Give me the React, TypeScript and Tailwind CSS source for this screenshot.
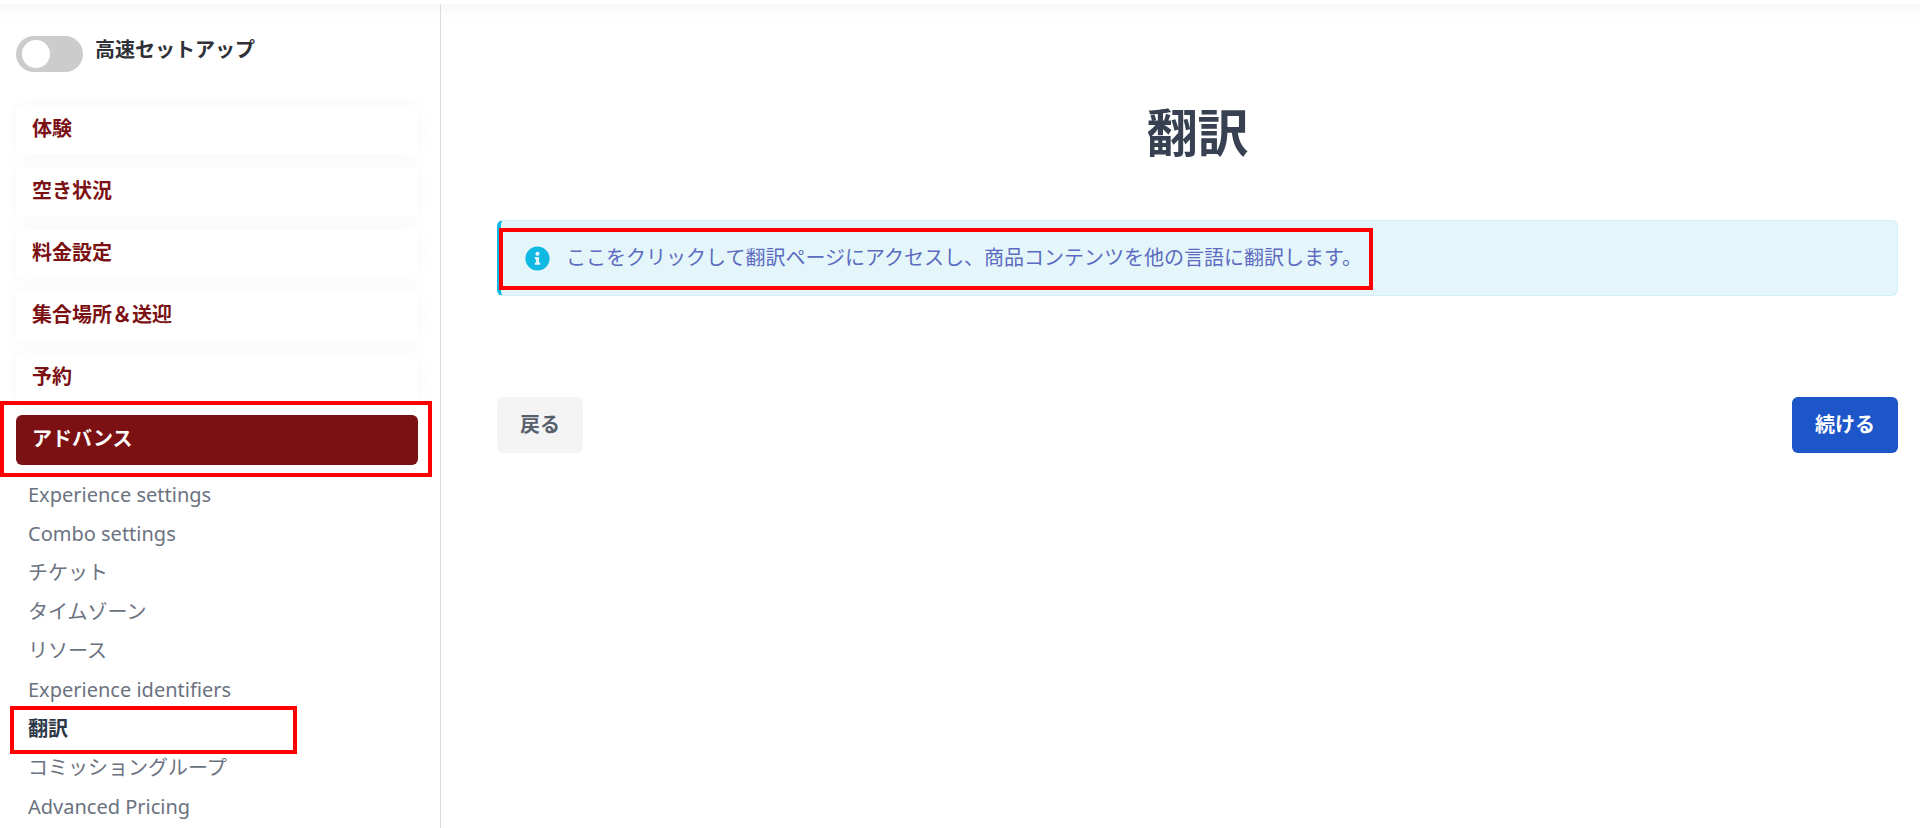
import { FaInfoCircle } from "react-icons/fa";

const sections = ["体験", "空き状況", "料金設定", "集合場所＆送迎", "予約"];

const subItems = [
  "Experience settings",
  "Combo settings",
  "チケット",
  "タイムゾーン",
  "リソース",
  "Experience identifiers",
  "翻訳",
  "コミッショングループ",
  "Advanced Pricing",
];

const Highlight = ({ className }: { className: string }) => (
  <span className={`pointer-events-none absolute border-4 border-[#ff0000] ${className}`} />
);

const Sidebar = () => {
  return (
    <aside className="w-[441px] shrink-0 border-r border-[#dcdcdc] pt-8 pl-4 pr-[22px]">
      <div className="flex items-start gap-3">
        <input
          id="quick-setup"
          type="checkbox"
          className="h-9 w-[67px] appearance-none rounded-full bg-[#cccccc] p-1 before:ml-0.5 before:block before:size-7 before:rounded-full before:bg-white checked:bg-[#7b1113] checked:before:ml-7"
        />
        <label htmlFor="quick-setup" className="font-bold leading-7 text-[#2f3136]">
          高速セットアップ
        </label>
      </div>

      <nav className="mt-[33px]">
        <ul className="grid gap-3">
          {sections.map((name) => (
            <li key={name}>
              <a
                href="#"
                className="block h-[50px] rounded-md bg-white px-4 font-bold leading-[48px] text-[#7b1113] shadow-[0_0_16px_rgba(0,0,0,0.04)]"
              >
                {name}
              </a>
            </li>
          ))}
          <li className="relative">
            <a
              href="#"
              className="block h-[50px] rounded-md bg-[#7b1113] px-4 font-bold leading-[48px] text-white"
            >
              アドバンス
            </a>
            <Highlight className="-left-4 -right-3.5 -top-3.5 -bottom-3" />
          </li>
        </ul>

        <ul className="mt-[10px] pl-3">
          {subItems.map((name) => (
            <li key={name} className="relative">
              {name === "翻訳" ? (
                <>
                  <a href="#" aria-current="page" className="block font-bold leading-[39px] text-[#2d3748]">
                    {name}
                  </a>
                  <Highlight className="-left-[18px] -top-[3px] h-12 w-[287px]" />
                </>
              ) : (
                <a href="#" className="block leading-[39px] text-[#6b7280]">
                  {name}
                </a>
              )}
            </li>
          ))}
        </ul>
      </nav>
    </aside>
  );
};

const App = () => {
  return (
    <div className="flex min-h-screen flex-col bg-white pt-1 font-['Noto_Sans','Noto_Sans_CJK_JP',sans-serif] text-[20px]">
      <div className="flex grow bg-linear-to-b from-[#f8f8f8] to-white to-[16px]">
        <Sidebar />
        <main className="grow pt-[93px] pl-14 pr-[22px]">
          <h1 className="text-center text-[51px] font-bold leading-[70px] text-[#374151]">翻訳</h1>

          <div className="relative mt-[53px] flex h-[76px] items-center gap-4 rounded-md border border-l-4 border-[#d0f1fa] border-l-[#10b9e4] bg-[#e4f6fa] pl-6">
            <FaInfoCircle className="size-[25px] text-[#10b9e4]" />
            <a href="#" className="text-[#5c6bc0]">
              ここをクリックして翻訳ページにアクセスし、商品コンテンツを他の言語に翻訳します。
            </a>
            <Highlight className="-left-[2px] top-[7px] h-[62px] w-[874px]" />
          </div>

          <div className="mt-[101px] flex justify-between">
            <button className="h-14 rounded-md bg-[#f4f4f4] px-[23px] font-bold text-[#56606d]">戻る</button>
            <button className="h-14 rounded-md bg-[#1d56c9] px-[23px] font-bold text-white">続ける</button>
          </div>
        </main>
      </div>
    </div>
  );
};

export default App;
